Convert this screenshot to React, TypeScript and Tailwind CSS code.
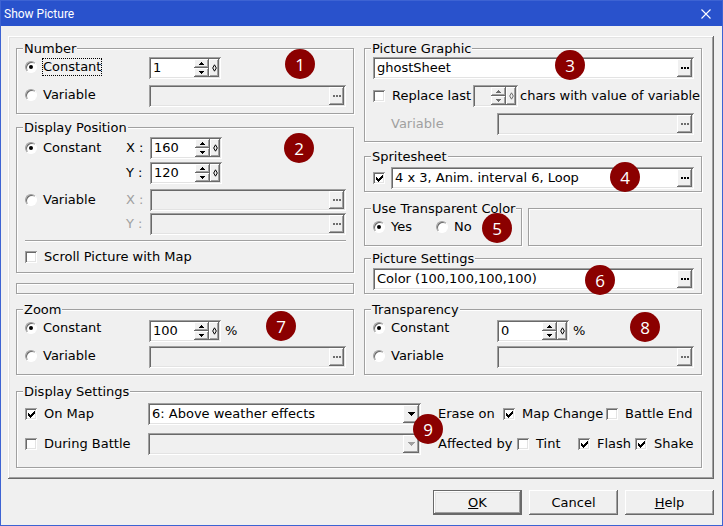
import React from 'react';

const RAISED =
  'bg-[#f0f0f0] shadow-[inset_-1px_-1px_0_#696969,inset_1px_1px_0_#ffffff,inset_-2px_-2px_0_#a0a0a0]';
const SUNKEN =
  'shadow-[inset_1px_1px_0_#a0a0a0,inset_-1px_-1px_0_#ffffff,inset_2px_2px_0_#696969,inset_-2px_-2px_0_#e3e3e3]';
const ETCHED = 'border border-[#a0a0a0] shadow-[1px_1px_0_#ffffff,inset_1px_1px_0_#ffffff]';

function Badge({ n, className }: { n: number; className: string }) {
  return (
    <span
      className={`absolute z-10 flex size-[30px] items-center justify-center rounded-full bg-[#8b0000] font-['Open_Sans',sans-serif] text-[17px] leading-none text-white ${className}`}
    >
      {n}
    </span>
  );
}

type GroupProps = {
  title: string;
  badge: number;
  badgeClass: string;
  className?: string;
  bodyClass: string;
  children: React.ReactNode;
};

function Group({ title, badge, badgeClass, className = '', bodyClass, children }: GroupProps) {
  return (
    <div className={`relative ${className}`}>
      <fieldset className={`min-w-0 ${ETCHED}`}>
        <legend className="ml-1.5 bg-[#f0f0f0] px-px leading-[15px] whitespace-nowrap">{title}</legend>
        <div className={`pr-[7px] pl-2 ${bodyClass}`}>{children}</div>
      </fieldset>
      <Badge n={badge} className={badgeClass} />
    </div>
  );
}

function Radio({
  name,
  label,
  checked = false,
  focused = false,
  className = '',
}: {
  name: string;
  label: string;
  checked?: boolean;
  focused?: boolean;
  className?: string;
}) {
  return (
    <label className={`flex h-[22px] shrink-0 items-center gap-1.5 ${className}`}>
      <input
        type="radio"
        name={name}
        defaultChecked={checked}
        className="grid size-3 shrink-0 appearance-none place-items-center rounded-full border border-t-[#a0a0a0] border-r-white border-b-white border-l-[#a0a0a0] bg-white shadow-[inset_1px_1px_0_#696969] outline-none before:size-1 before:rounded-full checked:before:bg-black"
      />
      <span className={focused ? 'leading-4 outline-1 outline-black outline-dotted' : 'leading-4'}>{label}</span>
    </label>
  );
}

function Check({
  label,
  hideLabel = false,
  checked = false,
  className = '',
}: {
  label: string;
  hideLabel?: boolean;
  checked?: boolean;
  className?: string;
}) {
  return (
    <label className={`flex h-[22px] shrink-0 items-center gap-[7px] whitespace-nowrap ${className}`}>
      <span className="grid size-3 shrink-0">
        <input
          type="checkbox"
          aria-label={label}
          defaultChecked={checked}
          className={`peer col-start-1 row-start-1 size-3 appearance-none bg-white ${SUNKEN}`}
        />
        <svg
          viewBox="0 0 12 12"
          shapeRendering="crispEdges"
          className="pointer-events-none invisible col-start-1 row-start-1 size-3 peer-checked:visible"
        >
          <path
            d="M3 5h1v3H3zM4 6h1v3H4zM5 7h1v3H5zM6 6h1v3H6zM7 5h1v3H7zM8 4h1v3H8zM9 3h1v3H9z"
            fill="#000"
          />
        </svg>
      </span>
      {!hideLabel && <span>{label}</span>}
    </label>
  );
}

function Spin({
  label,
  value = '',
  disabled = false,
  className = 'w-[72px]',
}: {
  label: string;
  value?: string;
  disabled?: boolean;
  className?: string;
}) {
  const ink = disabled ? '#6d6d6d' : '#000';
  return (
    <div className={`flex h-[22px] shrink-0 p-0.5 ${disabled ? '' : 'bg-white'} ${SUNKEN} ${className}`}>
      <input
        type="text"
        aria-label={label}
        defaultValue={value}
        disabled={disabled}
        className="min-w-0 flex-1 bg-transparent pl-0.5 outline-none"
      />
      <div className="flex w-[15px] flex-col">
        <button type="button" aria-label={`Increase ${label}`} disabled={disabled} className={`grid h-[9px] place-items-center ${RAISED}`}>
          <svg viewBox="0 0 5 3" shapeRendering="crispEdges" className="h-[3px] w-[5px]">
            <path d="M2 0h1v1h1v1h1v1H0V2h1V1h1z" fill={ink} />
          </svg>
        </button>
        <button type="button" aria-label={`Decrease ${label}`} disabled={disabled} className={`grid h-[9px] place-items-center ${RAISED}`}>
          <svg viewBox="0 0 5 3" shapeRendering="crispEdges" className="h-[3px] w-[5px]">
            <path d="M0 0h5v1H4v1H3v1H2V2H1V1H0z" fill={ink} />
          </svg>
        </button>
      </div>
      <button type="button" aria-label={`Drag ${label}`} disabled={disabled} className={`grid w-2.5 place-items-center ${RAISED}`}>
        <svg viewBox="0 0 5 8" className="h-2 w-[5px]">
          <path d="M2.5 .8L4.3 4 2.5 7.2.7 4z" fill="none" stroke={ink} strokeWidth="1" />
        </svg>
      </button>
    </div>
  );
}

function Picker({
  label,
  value = '',
  disabled = false,
  className = '',
}: {
  label: string;
  value?: string;
  disabled?: boolean;
  className?: string;
}) {
  return (
    <div className={`flex h-[22px] min-w-0 flex-1 p-0.5 ${disabled ? '' : 'bg-white'} ${SUNKEN} ${className}`}>
      <input
        type="text"
        aria-label={label}
        defaultValue={value}
        disabled={disabled}
        className="min-w-0 flex-1 bg-transparent pl-0.5 outline-none"
      />
      <button type="button" aria-label={`Choose ${label}`} disabled={disabled} className={`grid w-[15px] place-items-center ${RAISED}`}>
        <svg viewBox="0 0 8 2" shapeRendering="crispEdges" className="h-0.5 w-2">
          <path d="M0 0h2v2H0zM3 0h2v2H3zM6 0h2v2H6z" fill={disabled ? '#6d6d6d' : '#000'} />
        </svg>
      </button>
    </div>
  );
}

function Combo({ label, value = '', disabled = false }: { label: string; value?: string; disabled?: boolean }) {
  return (
    <div className={`relative flex h-[22px] p-0.5 ${disabled ? '' : 'bg-white'} ${SUNKEN}`}>
      <select
        aria-label={label}
        disabled={disabled}
        className="w-full appearance-none bg-transparent pl-0.5 opacity-100 outline-none"
      >
        <option>{value}</option>
      </select>
      <span className={`pointer-events-none absolute top-0.5 right-0.5 grid h-[18px] w-4 place-items-center ${RAISED}`}>
        <svg viewBox="0 0 7 4" shapeRendering="crispEdges" className="h-1 w-[7px]">
          <path d="M0 0h7v1H6v1H5v1H4v1H3V3H2V2H1V1H0z" fill={disabled ? '#a0a0a0' : '#000'} />
        </svg>
      </span>
    </div>
  );
}

function AxisRow({
  axis,
  value,
  className = '',
  children,
}: {
  axis: string;
  value?: string;
  className?: string;
  children?: React.ReactNode;
}) {
  const off = value === undefined;
  return (
    <div className={`flex items-center ${className}`}>
      <div className="w-[101px] shrink-0">{children}</div>
      <span className={`w-6 shrink-0 ${off ? 'text-[#a0a0a0]' : ''}`}>{axis} :</span>
      {off ? <Picker label={`${axis} variable`} disabled /> : <Spin label={axis} value={value} />}
    </div>
  );
}

function ConstantOrVariable({
  name,
  value,
  unit,
  focused,
  fieldsClass,
}: {
  name: string;
  value: string;
  unit?: string;
  focused?: boolean;
  fieldsClass: string;
}) {
  return (
    <div className="flex">
      <div className="flex w-[124px] shrink-0 flex-col gap-1.5">
        <Radio name={name} label="Constant" checked focused={focused} />
        <Radio name={name} label="Variable" />
      </div>
      <div className={`flex min-w-0 flex-1 flex-col ${fieldsClass}`}>
        <div className="flex items-center gap-1">
          <Spin label={`${name} value`} value={value} />
          {unit && <span>{unit}</span>}
        </div>
        <div className="flex">
          <Picker label={`${name} variable`} disabled />
        </div>
      </div>
    </div>
  );
}

export default function App() {
  return (
    <div className="flex min-h-screen w-full flex-col border border-[#3d63d3] bg-[#f0f0f0] font-['DejaVu_Sans',Verdana,sans-serif] text-[13px] leading-4 text-black">
      <header className="flex h-[25px] items-center justify-between bg-[#2952cc] pr-2 pl-[3px] text-white">
        <h1 className="font-['Roboto','Segoe_UI',sans-serif] text-xs">Show Picture</h1>
        <button type="button" aria-label="Close" className="grid size-4 place-items-center">
          <svg viewBox="0 0 10 10" className="size-2.5">
            <path d="M.5.5l9 9M9.5.5l-9 9" stroke="#fff" strokeWidth="1.1" fill="none" />
          </svg>
        </button>
      </header>

      <main className="pt-2.5 pr-2 pb-2.5 pl-[7px]">
        <div className="flex flex-col gap-[9px] pt-[5px] pr-3 pb-[11px] pl-2 shadow-[inset_-1px_-1px_0_#696969,inset_1px_1px_0_#ffffff,inset_-2px_-2px_0_#a0a0a0,inset_2px_2px_0_#e3e3e3]">
          <div className="flex gap-2.5">
            <div className="flex min-w-0 flex-1 flex-col">
              <Group title="Number" badge={1} badgeClass="top-2 right-[39px]" bodyClass="pb-1.5">
                <ConstantOrVariable name="Number" value="1" focused fieldsClass="gap-1.5 pt-px" />
              </Group>

              <Group
                title="Display Position"
                badge={2}
                badgeClass="top-[13px] right-10"
                className="mt-1.5"
                bodyClass="pt-0.5 pb-1"
              >
                <AxisRow axis="X" value="160">
                  <Radio name="Position" label="Constant" checked />
                </AxisRow>
                <AxisRow axis="Y" value="120" className="mt-[3px]" />
                <AxisRow axis="X" className="mt-[5px]">
                  <Radio name="Position" label="Variable" />
                </AxisRow>
                <AxisRow axis="Y" className="mt-0.5" />
                <div className="mt-[5px] mb-1 border-t border-b border-t-[#a0a0a0] border-b-white" />
                <Check label="Scroll Picture with Map" />
              </Group>

              <div className={`mt-2.5 h-[11px] ${ETCHED}`} />

              <Group title="Zoom" badge={7} badgeClass="top-[9px] right-[58px]" className="mt-2" bodyClass="pb-1.5">
                <ConstantOrVariable name="Zoom" value="100" unit="%" fieldsClass="gap-1 pt-[3px]" />
              </Group>
            </div>

            <div className="flex min-w-0 flex-1 flex-col">
              <Group title="Picture Graphic" badge={3} badgeClass="top-[9px] right-[117px]" bodyClass="pt-px pb-1.5">
                <div className="flex">
                  <Picker label="Picture graphic" value="ghostSheet" />
                </div>
                <div className="mt-1.5 flex items-center gap-0.5 whitespace-nowrap">
                  <Check label="Replace last" />
                  <Spin label="Character count" disabled className="w-[45px]" />
                  <span>chars with value of variable</span>
                </div>
                <div className="mt-1.5 flex items-center">
                  <span className="w-[124px] shrink-0 pl-[18px] text-[#a0a0a0]">Variable</span>
                  <Picker label="Picture variable" disabled />
                </div>
              </Group>

              <Group
                title="Spritesheet"
                badge={4}
                badgeClass="top-[13px] right-[62px]"
                className="mt-[7px]"
                bodyClass="flex gap-1.5 pt-[3px] pb-0.5"
              >
                <Check label="Use spritesheet" hideLabel checked />
                <Picker label="Spritesheet settings" value="4 x 3, Anim. interval 6, Loop" />
              </Group>

              <div className="mt-[9px] flex gap-1.5">
                <Group
                  title="Use Transparent Color"
                  badge={5}
                  badgeClass="top-3 right-2.5"
                  className="w-[158px] shrink-0"
                  bodyClass="flex pb-[7px]"
                >
                  <Radio name="Transparent" label="Yes" checked className="w-[63px]" />
                  <Radio name="Transparent" label="No" />
                </Group>
                <div className={`mt-[7px] flex-1 ${ETCHED}`} />
              </div>

              <Group
                title="Picture Settings"
                badge={6}
                badgeClass="top-3.5 right-[87px]"
                className="mt-[5px]"
                bodyClass="flex pt-0.5 pb-[3px]"
              >
                <Picker label="Picture settings" value="Color (100,100,100,100)" />
              </Group>

              <Group title="Transparency" badge={8} badgeClass="top-2.5 right-[42px]" className="mt-2" bodyClass="pb-1.5">
                <ConstantOrVariable name="Transparency" value="0" unit="%" fieldsClass="gap-1 pt-[3px]" />
              </Group>
            </div>
          </div>

          <Group title="Display Settings" badge={9} badgeClass="top-[30px] right-[259px]" bodyClass="flex pt-1 pb-3">
            <div className="flex w-[123px] shrink-0 flex-col gap-2">
              <Check label="On Map" checked />
              <Check label="During Battle" />
            </div>
            <div className="flex min-w-0 flex-1 flex-col gap-2">
              <Combo label="Map layer" value="6: Above weather effects" />
              <Combo label="Battle layer" disabled />
            </div>
            <div className="ml-[17px] flex w-64 shrink-0 flex-col gap-2 whitespace-nowrap">
              <div className="flex items-center">
                <span className="w-[65px] shrink-0">Erase on</span>
                <Check label="Map Change" checked className="w-[103px]" />
                <Check label="Battle End" />
              </div>
              <div className="flex items-center">
                <span className="w-[79px] shrink-0">Affected by</span>
                <Check label="Tint" className="w-[61px]" />
                <Check label="Flash" checked className="w-[57px]" />
                <Check label="Shake" checked />
              </div>
            </div>
          </Group>
        </div>

        <div className="mt-[11px] flex justify-end gap-[7px]">
          <button
            type="button"
            className="h-[25px] w-[89px] border border-[#696969] shadow-[inset_-1px_-1px_0_#696969,inset_1px_1px_0_#ffffff,inset_-2px_-2px_0_#a0a0a0,inset_2px_2px_0_#e3e3e3]"
          >
            <span className="underline">O</span>K
          </button>
          <button type="button" className={`h-[25px] w-[89px] ${RAISED}`}>
            Cancel
          </button>
          <button type="button" className={`h-[25px] w-[89px] ${RAISED}`}>
            <span className="underline">H</span>elp
          </button>
        </div>
      </main>
    </div>
  );
}
